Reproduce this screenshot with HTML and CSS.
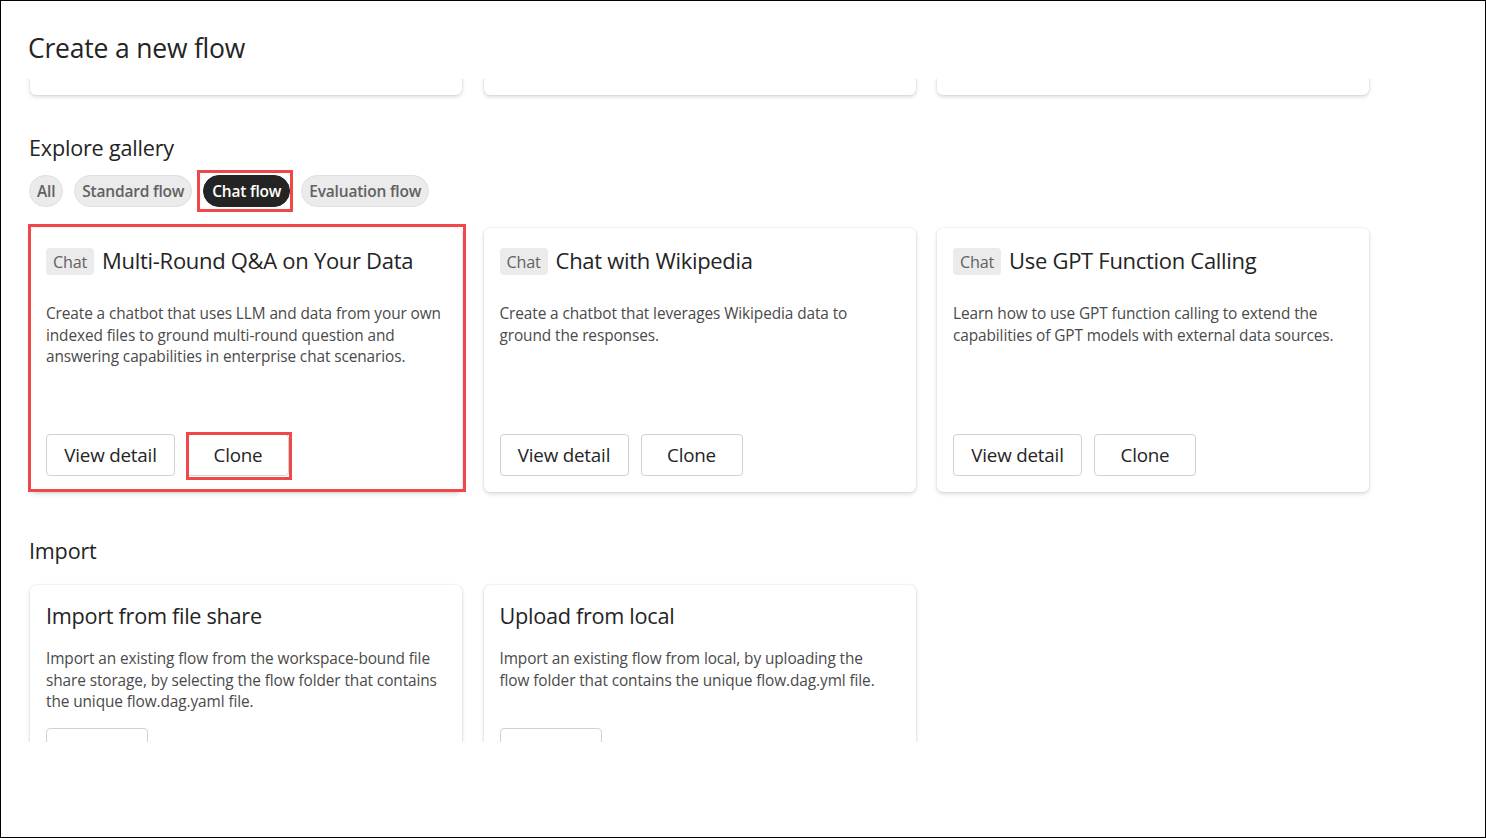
FILE: index.html
```html
<!DOCTYPE html>
<html lang="en">
<head>
<meta charset="utf-8">
<title>Create a new flow</title>
<link rel="stylesheet" href="styles.css">
</head>
<body>
<div class="frame">
  <header class="page-header">
    <h1 class="page-title">Create a new flow</h1>
  </header>
  <div class="scroller">
    <div class="content">
      <div class="card-row top-row">
        <div class="card stub"></div>
        <div class="card stub"></div>
        <div class="card stub"></div>
      </div>

      <h2 class="section-title gallery-title">Explore gallery</h2>
      <div class="pills">
        <span class="pill">All</span>
        <span class="pill">Standard flow</span>
        <span class="pill active hl hl-pill">Chat flow</span>
        <span class="pill">Evaluation flow</span>
      </div>

      <div class="card-row gallery-row">
        <div class="card gallery-card hl hl-card">
          <div class="card-head">
            <span class="badge">Chat</span>
            <span class="card-title">Multi-Round Q&amp;A on Your Data</span>
          </div>
          <p class="card-desc">Create a chatbot that uses LLM and data from your own indexed files to ground multi-round question and answering capabilities in enterprise chat scenarios.</p>
          <div class="actions">
            <button class="btn btn-detail">View detail</button>
            <button class="btn btn-clone hl hl-btn">Clone</button>
          </div>
        </div>
        <div class="card gallery-card">
          <div class="card-head">
            <span class="badge">Chat</span>
            <span class="card-title">Chat with Wikipedia</span>
          </div>
          <p class="card-desc">Create a chatbot that leverages Wikipedia data to ground the responses.</p>
          <div class="actions">
            <button class="btn btn-detail">View detail</button>
            <button class="btn btn-clone">Clone</button>
          </div>
        </div>
        <div class="card gallery-card">
          <div class="card-head">
            <span class="badge">Chat</span>
            <span class="card-title">Use GPT Function Calling</span>
          </div>
          <p class="card-desc">Learn how to use GPT function calling to extend the capabilities of GPT models with external data sources.</p>
          <div class="actions">
            <button class="btn btn-detail">View detail</button>
            <button class="btn btn-clone">Clone</button>
          </div>
        </div>
      </div>

      <h2 class="section-title import-title">Import</h2>
      <div class="card-row import-row">
        <div class="card import-card">
          <div class="import-name">Import from file share</div>
          <p class="card-desc import-desc">Import an existing flow from the workspace-bound file share storage, by selecting the flow folder that contains the unique flow.dag.yaml file.</p>
          <div class="actions">
            <button class="btn btn-clone" aria-label="Import"></button>
          </div>
        </div>
        <div class="card import-card">
          <div class="import-name">Upload from local</div>
          <p class="card-desc import-desc">Import an existing flow from local, by uploading the flow folder that contains the unique flow.dag.yml file.</p>
          <div class="actions">
            <button class="btn btn-clone" aria-label="Upload"></button>
          </div>
        </div>
      </div>
    </div>
  </div>
</div>
</body>
</html>
```

FILE: styles.css
```css
* { box-sizing: border-box; }

html, body {
  margin: 0;
  padding: 0;
  background: #fff;
}

body {
  font-family: "Open Sans", "Noto Sans", "Liberation Sans", sans-serif;
  color: #242424;
}

.frame {
  width: 1486px;
  height: 838px;
  border: 1px solid #000;
  background: #fff;
  overflow: hidden;
}

.page-header {
  padding: 31px 0 0 27px;
}

.page-title {
  margin: 0;
  font-size: 26.5px;
  line-height: 32px;
  font-weight: 400;
  letter-spacing: -0.2px;
}

.scroller {
  margin-top: 15px;
  height: 663px;
  overflow: hidden;
}

.content {
  padding-left: 29px;
  padding-top: 4px;
}

.card-row {
  display: grid;
  grid-template-columns: 432px 432px 432px;
  column-gap: 21.5px;
}

.card {
  background: #fff;
  border-radius: 6px;
  box-shadow: 0 0 2px rgba(0, 0, 0, 0.12), 0 2px 4px rgba(0, 0, 0, 0.14);
}

.top-row {
  margin-top: -138px;
}

.stub {
  height: 150px;
}

.section-title {
  margin: 0;
  font-size: 21.6px;
  line-height: 28px;
  font-weight: 400;
  letter-spacing: -0.2px;
  margin-left: -1px;
}

.gallery-title {
  margin-top: 39px;
}

.pills {
  display: flex;
  gap: 11px;
  margin-top: 13px;
  margin-left: -1px;
}

.pill {
  height: 32px;
  padding: 0 7px;
  display: inline-flex;
  align-items: center;
  border-radius: 16px;
  background: #ebebeb;
  border: 1px solid #e0e0e0;
  color: #616161;
  font-size: 15.5px;
  font-weight: 600;
  letter-spacing: -0.2px;
}

.pill.active {
  background: #242424;
  border-color: #242424;
  color: #fff;
  padding: 0 8px;
}

/* red annotation rectangles drawn over the highlighted elements */
.hl {
  position: relative;
}

.hl::after {
  content: "";
  position: absolute;
  border: 3px solid #f0474a;
  pointer-events: none;
}

.hl-pill::after {
  left: -7px;
  right: -4px;
  top: -6px;
  bottom: -6px;
}

.hl-card::after {
  left: -2px;
  right: -4px;
  top: -4px;
  bottom: 0;
}

.hl-btn::after {
  left: -2px;
  right: -4px;
  top: -3px;
  bottom: -5px;
}

.gallery-row {
  margin-top: 21px;
}

.gallery-card {
  height: 264px;
  padding: 18px 14px 16px 16px;
  display: flex;
  flex-direction: column;
}

.card-head {
  display: flex;
  align-items: center;
  gap: 8px;
}

.badge {
  height: 27px;
  padding: 0 7px;
  display: inline-flex;
  align-items: center;
  background: #ebebeb;
  border-radius: 4px;
  color: #616161;
  font-size: 16.2px;
  letter-spacing: -0.2px;
  margin-top: 2px;
}

.card-title {
  font-size: 22px;
  line-height: 28px;
  letter-spacing: -0.3px;
  color: #242424;
  margin-top: -2px;
}

.card-desc {
  margin: 28px 0 0 0;
  font-size: 15.4px;
  line-height: 21.5px;
  color: #4a4a4a;
  letter-spacing: -0.1px;
}

.actions {
  margin-top: auto;
  display: flex;
  gap: 12px;
}

.btn {
  height: 42px;
  padding: 0 12px;
  border: 1px solid #d1d1d1;
  border-radius: 4px;
  background: #fff;
  color: #242424;
  font-family: inherit;
  font-size: 18.8px;
  letter-spacing: -0.2px;
}

.btn-detail {
  width: 129px;
}

.btn-clone {
  width: 102px;
}

.import-title {
  margin-top: 45px;
}

.import-row {
  margin-top: 20px;
}

.import-card {
  padding: 16px 20px 16px 16px;
}

.import-name {
  font-size: 21.7px;
  line-height: 28px;
  letter-spacing: -0.3px;
  margin-top: 1px;
}

.import-desc {
  margin-top: 18px;
  min-height: 65px;
}

.import-card .actions {
  margin-top: 15px;
}
```
